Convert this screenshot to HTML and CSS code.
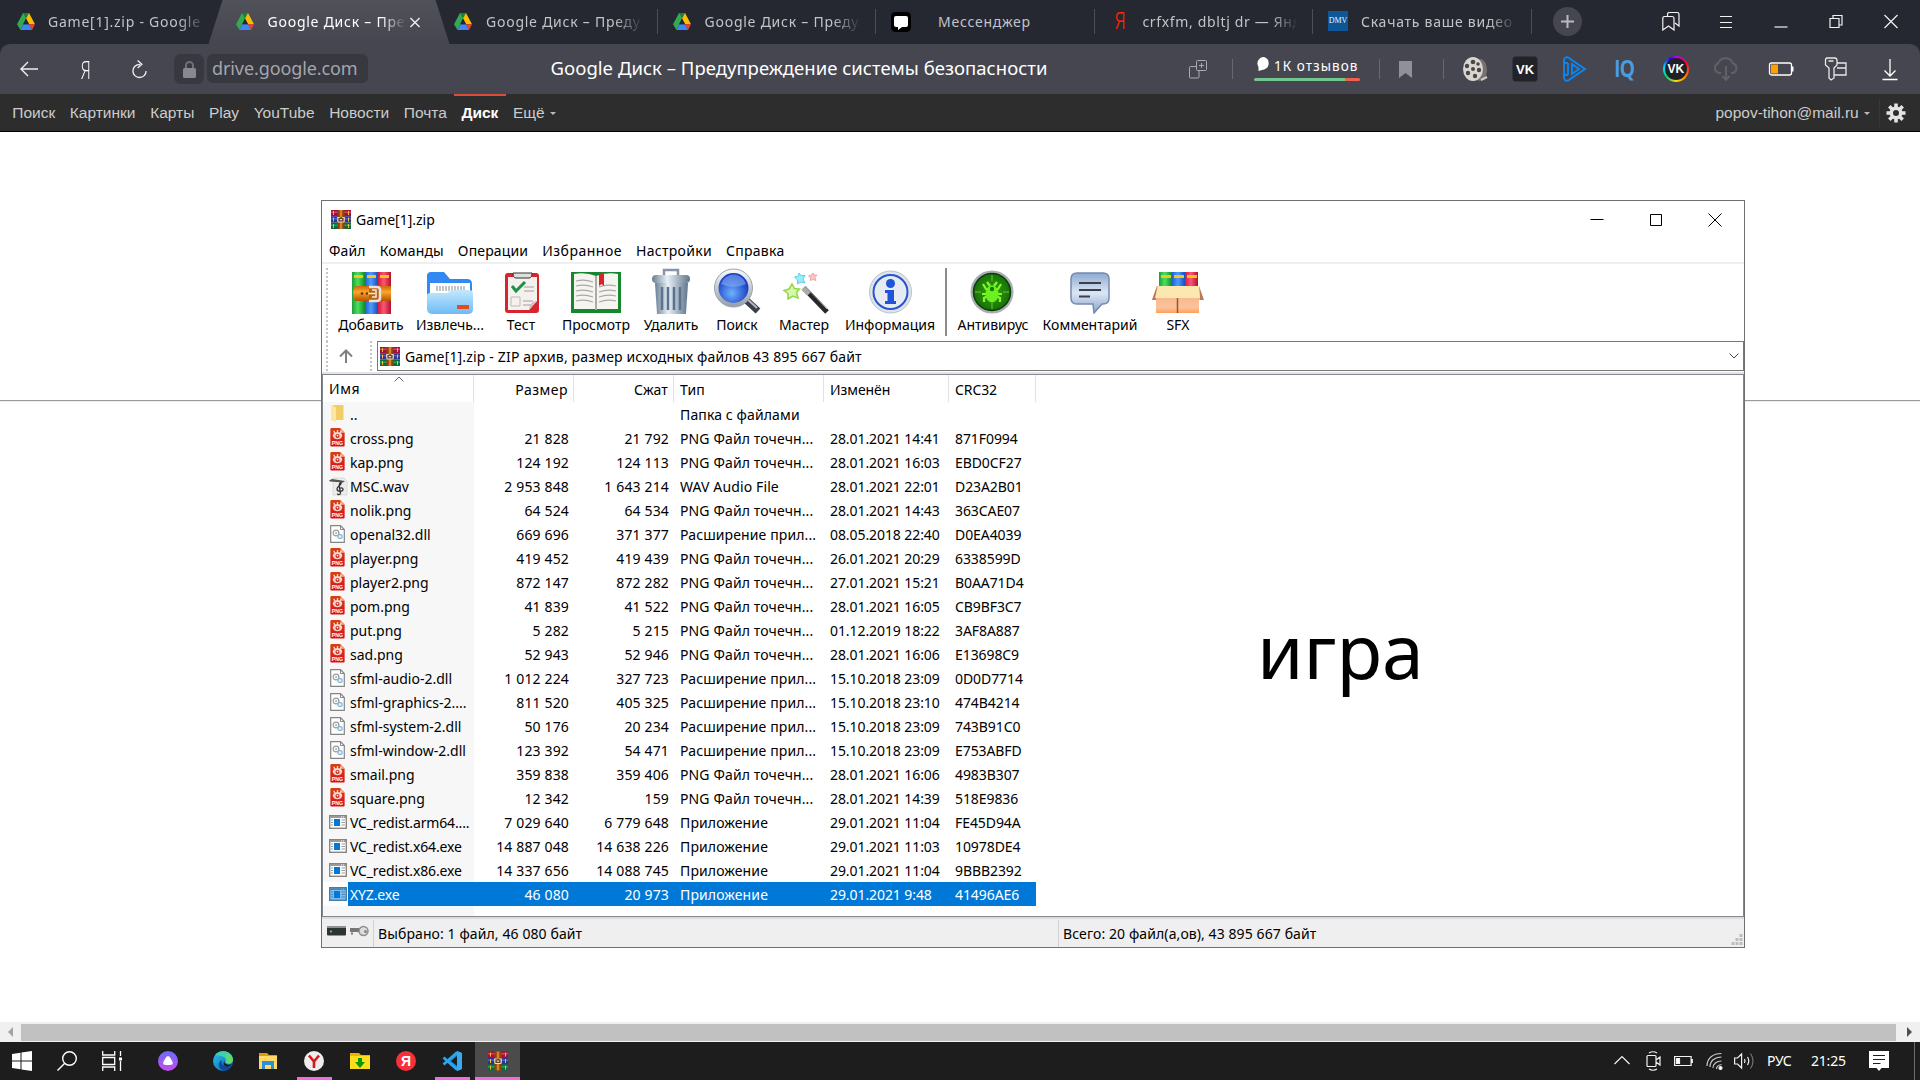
FILE: index.html
```html
<!DOCTYPE html>
<html lang="ru">
<head>
<meta charset="utf-8">
<title>Google Диск – Предупреждение системы безопасности</title>
<link rel="stylesheet" href="styles.css">
</head>
<body>
<svg class="defs" width="0" height="0">
  <defs>
    <linearGradient id="gGreen"><stop offset="0" stop-color="#1f9e3a"/><stop offset=".45" stop-color="#4be05f"/><stop offset="1" stop-color="#128a2b"/></linearGradient>
    <linearGradient id="gBlue"><stop offset="0" stop-color="#1f62d0"/><stop offset=".45" stop-color="#4f9bff"/><stop offset="1" stop-color="#1550b8"/></linearGradient>
    <linearGradient id="gRed"><stop offset="0" stop-color="#d01c40"/><stop offset=".45" stop-color="#ff5470"/><stop offset="1" stop-color="#b01030"/></linearGradient>
    <linearGradient id="gBelt" x2="0" y2="1"><stop offset="0" stop-color="#c96a08"/><stop offset=".4" stop-color="#ffa52a"/><stop offset="1" stop-color="#b35300"/></linearGradient>
    <linearGradient id="gFolder" x2="0" y2="1"><stop offset="0" stop-color="#c4e8fd"/><stop offset="1" stop-color="#6dbbf5"/></linearGradient>
    <linearGradient id="gSteel"><stop offset="0" stop-color="#6b7f94"/><stop offset=".4" stop-color="#e8f0f7"/><stop offset="1" stop-color="#60758b"/></linearGradient>
    <linearGradient id="gRing" x2="0" y2="1"><stop offset="0" stop-color="#f4f6f8"/><stop offset="1" stop-color="#9aa2ab"/></linearGradient>
    <radialGradient id="gLens" cx=".45" cy=".65"><stop offset="0" stop-color="#6eb2ff"/><stop offset="1" stop-color="#1b3fc4"/></radialGradient>
    <radialGradient id="gBug"><stop offset="0" stop-color="#3aa512"/><stop offset="1" stop-color="#146b06"/></radialGradient>
    <linearGradient id="gNote" x2="0" y2="1"><stop offset="0" stop-color="#8fa9d0"/><stop offset=".5" stop-color="#dbe7f6"/><stop offset="1" stop-color="#8aa3c6"/></linearGradient>
    <linearGradient id="gBox" x2="0" y2="1"><stop offset="0" stop-color="#f2b184"/><stop offset=".8" stop-color="#fbc29a"/><stop offset="1" stop-color="#ff9f5c"/></linearGradient>
    <linearGradient id="gPng" x2="0" y2="1"><stop offset="0" stop-color="#d8400d"/><stop offset="1" stop-color="#dc0c25"/></linearGradient>
    <linearGradient id="gEdge" x2="1" y2="1"><stop offset="0" stop-color="#2fc3e8"/><stop offset="1" stop-color="#0a5bb5"/></linearGradient>
    <linearGradient id="gAlice" x2="0" y2="1"><stop offset="0" stop-color="#6c6bff"/><stop offset="1" stop-color="#c34df0"/></linearGradient>
    <symbol id="drive" viewBox="0 0 18 17">
      <path d="M6 0h6l-3 5.500L3.500 17 0 11.300z" fill="#34a853"/><path d="M6 0h6L9 5.500z" fill="#188038"/>
      <path d="M12 0l6 11.300h-6L9 5.500z" fill="#fbbc04"/><path d="M3.500 17 6.300 11.300H12L15 17z" fill="#4285f4"/>
      <path d="M12 11.300h6L15 17z" fill="#ea4335"/><path d="M9 5.500 12 11.300H6.200z" fill="#252732"/>
    </symbol>
    <symbol id="rar" viewBox="0 0 20 19">
      <rect width="20" height="6.200" fill="#a80f38"/><rect y="1.500" width="20" height="1.500" fill="#d0416a"/>
      <rect y="6.200" width="20" height="6.400" fill="#2c3392"/><rect y="8" width="20" height="1.500" fill="#5560c8"/>
      <rect y="12.600" width="20" height="6.400" fill="#0b6a3c"/><rect y="14.500" width="20" height="1.500" fill="#2a9d60"/>
      <path d="M2.500 1v4M2.500 7.500v4M2.500 14v4M17.500 1v4M17.500 7.500v4M17.500 14v4" stroke="#e8b93d" stroke-width="1"/>
      <rect x="6.500" width="7" height="19" fill="#8f4210"/><path d="M10 0v19" stroke="#d98024" stroke-width="2.500"/>
      <path d="M7 7.500h6v4.500H7z" fill="#5c4028"/><path d="M6.800 11.800V7.500h2M13.200 11.800V7.500h-2M8.800 9.700h2.400M6.800 12h6.400" fill="none" stroke="#e9dcc8" stroke-width="1.200"/>
    </symbol>
    <symbol id="png" viewBox="0 0 15 20">
      <path d="M1 0h9.500L15 5v13.500a1 1 0 0 1-1 1H1a1 1 0 0 1-1-1V1a1 1 0 0 1 1-1z" fill="url(#gPng)"/>
      <path d="M10.500 0L15 5h-4.500z" fill="#f0a58c"/>
      <ellipse cx="7.500" cy="8" rx="5" ry="3.900" fill="#f3d5cb"/><path d="M3.500 3l1.500 3M7.500 2v4M11.500 3L10 6" stroke="#f3d5cb" stroke-width="1.500"/>
      <circle cx="7.500" cy="8.300" r="2.100" fill="#c22b12"/><circle cx="7.500" cy="8" r=".9" fill="#fff"/>
      <text x="7.500" y="18.300" text-anchor="middle" class="png-text">PNG</text>
    </symbol>
    <symbol id="dll" viewBox="0 0 15 18">
      <path d="M.7.7h9.800l3.800 3.800v12.800H.7z" fill="#fff" stroke="#858585" stroke-width="1.200"/><path d="M10.500.7v3.800h3.800" fill="none" stroke="#858585"/>
      <circle cx="6" cy="8" r="2.900" fill="none" stroke="#9a9a9a" stroke-width="1.200"/><circle cx="6" cy="8" r="1" fill="#aaa"/>
      <circle cx="10" cy="11.500" r="2.200" fill="#d8edf8" stroke="#86b9d6" stroke-width="1.200"/>
    </symbol>
    <symbol id="exe" viewBox="0 0 18 14">
      <rect x=".7" y=".7" width="16.600" height="12.600" fill="#fff" stroke="#858585" stroke-width="1.400"/>
      <path d="M1 2h16" stroke="#999" stroke-width="2"/><path d="M12 2h1M14 2h1" stroke="#fff"/>
      <rect x="5" y="4" width="6" height="7" fill="#0078d7"/><path d="M2 5h2M2 7.500h2M2 10h2M12.500 5h3.500M12.500 7.500h3.500M12.500 10h3.500" stroke="#999"/>
    </symbol>
    <symbol id="wav" viewBox="0 0 19 19">
      <path d="M4 1h11l3 3v14H4z" fill="#ececec" stroke="#ccc" stroke-width=".6"/>
      <path d="M0 3.500 3 2l13 2-2 1.500L1 4.500z" fill="#555"/>
      <path d="M12 5c-3 2-1.500 5-.5 11 0 2-3 2-3 .5M12 5c1.500 3-4 4-4 7s6 3 6 .5-3.500-2-3.500 0" fill="none" stroke="#333" stroke-width="1.300"/>
    </symbol>
    <symbol id="folder" viewBox="0 0 13 17">
      <path d="M2 0h9.500a1 1 0 0 1 1 1v14H2z" fill="#f1cc67"/><path d="M0 0l5 2.500V17l-5-2z" fill="#fde69f"/>
    </symbol>
  </defs>
</svg>

<header class="browser">
  <nav class="tabs">
    <div class="tab"><svg class="fav"><use href="#drive"/></svg><span class="tab-text">Game[1].zip - Google Диск</span></div>
    <div class="tab active"><svg class="fav"><use href="#drive"/></svg><span class="tab-text">Google Диск – Предупреждение</span>
      <svg class="tab-close" viewBox="0 0 12 12"><path d="M1 1l10 10M11 1L1 11" stroke="#eee" stroke-width="1.500"/></svg></div>
    <div class="tab sep"><svg class="fav"><use href="#drive"/></svg><span class="tab-text">Google Диск – Предупреждение</span></div>
    <div class="tab sep"><svg class="fav"><use href="#drive"/></svg><span class="tab-text">Google Диск – Предупреждение</span></div>
    <div class="tab sep"><svg class="fav big" viewBox="0 0 20 20"><rect width="20" height="20" rx="4.500" fill="#000"/><path d="M5 4h10a2 2 0 0 1 2 2v7a2 2 0 0 1-2 2h-4l-4 3v-3H5a2 2 0 0 1-2-2V6a2 2 0 0 1 2-2z" fill="#fff"/></svg><span class="tab-text wide">Мессенджер</span></div>
    <div class="tab sep"><span class="fav-ya">Я</span><span class="tab-text ya-query">crfxfm, dbltj dr — Яндекс</span></div>
    <div class="tab sep"><span class="fav-dmv">DMV</span><span class="tab-text dmv">Скачать ваше видео</span></div>
    <button class="new-tab"><svg viewBox="0 0 29 29"><circle cx="14.500" cy="14.500" r="14.500" fill="#464650"/><path d="M8 14.500h13M14.500 8v13" stroke="#b9bac0" stroke-width="2"/></svg></button>
    <div class="win-controls">
      <svg viewBox="0 0 18 19"><path d="M5.500 5V2.500q0-2 2-2H15q2 0 2 2V14l-4-3M.8 18V6.500q0-2 2-2H10q2 0 2 2V18l-5.500-4z" /></svg>
      <svg viewBox="0 0 18 19"><path d="M3 4.500h12M3 10.500h12M3 15.500h12"/></svg>
      <svg viewBox="0 0 18 19"><path d="M2.500 15h13"/></svg>
      <svg viewBox="0 0 18 19"><path d="M3 6.500h9v9H3zM6 6V3.500h9V13h-3"/></svg>
      <svg viewBox="0 0 18 19"><path d="M2.500 3l13 13M15.500 3l-13 13"/></svg>
    </div>
  </nav>
  <div class="bar">
    <div class="bar-left">
      <svg class="i-back" viewBox="0 0 18 16"><path d="M18 8H1M8 1L1 8l7 7"/></svg>
      <span class="i-ya">Я</span>
      <svg class="i-reload" viewBox="0 0 16 20"><path d="M8.500 4.500C4 4.500 1 7.500 1 11.500s3 7 7 7 7-3 7-7M6 .5l4.500 4L6 8.500"/></svg>
      <span class="lock"><svg viewBox="0 0 13 17"><path d="M3 8V4.500a3.500 3.500 0 0 1 7 0V8" fill="none" stroke="#6f7079" stroke-width="2"/><rect y="7" width="13" height="10" rx="1.500" fill="#878991"/></svg></span>
      <span class="url">drive.google.com</span>
    </div>
    <div class="page-title">Google Диск – Предупреждение системы безопасности</div>
    <div class="bar-right">
      <svg class="i-copy" viewBox="0 0 18 19"><path d="M7.500 1.500q0-1 1-1h8q1 0 1 1v8q0 1-1 1h-8q-1 0-1-1zM7 6.500H1.500q-1 0-1 1v9.500q0 1 1 1H9q1 0 1-1V11M12.500 3v5M10 5.500h5"/></svg>
      <i class="vr"></i>
      <div class="reviews"><span><svg viewBox="0 0 14 14"><path d="M7 0a6.500 6.500 0 0 1 0 12.500L1.500 14V10A6.500 6.500 0 0 1 7 0z" fill="#fff"/></svg>1К отзывов</span><b></b></div>
      <i class="vr v2"></i>
      <svg class="i-mark" viewBox="0 0 13 17"><path d="M0 0h13v17l-6.500-5L0 17z" fill="#909198"/></svg>
      <i class="vr v3"></i>
      <div class="ext">
        <svg viewBox="0 0 26 26"><ellipse cx="18" cy="14" rx="7" ry="11" fill="#77726f"/><ellipse cx="11" cy="13" rx="10" ry="12" fill="#d8d5d2"/><g fill="#4a4745"><circle cx="11" cy="13" r="2"/><circle cx="11" cy="6" r="2.300"/><circle cx="5" cy="10" r="2.200"/><circle cx="6" cy="17" r="2.200"/><circle cx="13" cy="20" r="2.200"/><circle cx="17" cy="14" r="2.200"/><circle cx="16" cy="8" r="1.800"/></g><path d="M19 24l6-3" stroke="#ccc" stroke-width="2"/></svg>
        <svg viewBox="0 0 26 26"><rect x=".5" y=".5" width="25" height="25" rx="3.500" fill="#222328"/><text x="13" y="18" text-anchor="middle" class="vk">VK</text></svg>
        <svg viewBox="0 0 26 26"><path d="M2 4a3 3 0 0 1 5-2l16 11L7 24a3 3 0 0 1-5-2zM2 7h4M2 19h4M6 7v12M10 8l7 5-7 5z" fill="none" stroke="#0b86f0" stroke-width="1.900"/></svg>
        <span class="iq">IQ</span>
        <span class="vk-ring"><span>VK</span></span>
        <svg viewBox="0 0 26 26"><path d="M8 17H6a5 5 0 0 1-1-9.500 8 8 0 0 1 15 0A5 5 0 0 1 20 17h-2M13 10v13M9.500 20l3.500 4 3.500-4" fill="none" stroke="#606066" stroke-width="2"/></svg>
        <svg class="gap" viewBox="0 0 26 26"><rect x="1.500" y="7" width="22" height="12" rx="2" fill="none" stroke="#fff" stroke-width="1.300"/><path d="M24.500 10.500v5" stroke="#fff" stroke-width="2"/><rect x="3" y="8.500" width="7" height="9" fill="#ffa000"/></svg>
        <svg class="gap" viewBox="0 0 26 26"><path d="M3 2h9q2 0 2 3v4l-3 3v10l-3 2-2-2V12L2.500 9V4q0-2 2-2M5.500 5h5M14 7h9v12H11.500M14 12h9" fill="none" stroke="#e8e8ea" stroke-width="1.300"/></svg>
        <svg class="gap" viewBox="0 0 26 26"><path d="M13 3v17M7.500 14.500L13 20l5.500-5.500M5.500 23.500h15" fill="none" stroke="#fff" stroke-width="1.300"/></svg>
      </div>
    </div>
  </div>
</header>

<nav class="gbar">
  <a>Поиск</a><a>Картинки</a><a>Карты</a><a>Play</a><a>YouTube</a><a>Новости</a><a>Почта</a><a class="on">Диск</a><a>Ещё <i class="caret"></i></a>
  <span class="account">popov-tihon@mail.ru <i class="caret"></i></span>
  <svg class="gear" viewBox="0 0 20 20"><g stroke="#e3e3e3" stroke-width="3.600"><path d="M10 .5v19M.5 10h19M3.300 3.300l13.400 13.400M16.700 3.300L3.300 16.700"/></g><circle cx="10" cy="10" r="6.500" fill="#e3e3e3"/><circle cx="10" cy="10" r="3" fill="#2d2d2d"/></svg>
</nav>

<main class="page"><hr></main>

<section class="winrar">
  <header class="w-title">
    <svg class="w-icon"><use href="#rar"/></svg><span>Game[1].zip</span>
    <div class="w-controls">
      <svg viewBox="0 0 14 14"><path d="M.5 6.500h13"/></svg>
      <svg viewBox="0 0 14 14"><path d="M1.500 1.500h11v11h-11z"/></svg>
      <svg viewBox="0 0 14 14"><path d="M.5.500l13 13M13.500.5l-13 13"/></svg>
    </div>
  </header>
  <nav class="w-menu"><span>Файл</span><span>Команды</span><span>Операции</span><span>Избранное</span><span>Настройки</span><span>Справка</span></nav>
  <div class="w-tools">
    <i class="dots"></i>
    <div class="tool" style="width:78px"><svg viewBox="0 0 52 46"><rect x="7" y="4" width="13" height="42" fill="url(#gGreen)"/><rect x="20" y="4" width="13" height="42" fill="url(#gBlue)"/><rect x="33" y="4" width="13" height="42" fill="url(#gRed)"/><path d="M9 8.500h9M22 8.500h9M35 8.500h9" stroke="#f5c518" stroke-width="3"/><path d="M10 18h36v15H10q-4-7 0-15z" fill="url(#gBelt)"/><path d="M24 19h8q3 0 3 3v8q0 3-3 3h-8" fill="#b86310" stroke="#ebe3da" stroke-width="2.500"/><path d="M27 22h4v7h-4M22 25.500h8" fill="none" stroke="#f6ead8" stroke-width="1.500"/><circle cx="17" cy="25.500" r="1.300" fill="#6a3500"/><circle cx="22" cy="25.500" r="1.300" fill="#6a3500"/></svg>Добавить</div>
    <div class="tool" style="width:80px"><svg viewBox="0 0 52 46"><path d="M3 8q0-4 4-4h13l6 7h17q5 0 5 5v12H3z" fill="#3389f2"/><path d="M6 15h40v14H6z" fill="#fff"/><path d="M12 20.500h29" stroke="#c4c4c4" stroke-width="5" stroke-dasharray="2 1"/><path d="M3 28q0-3 3-3h17l5-3h17q4 0 4 4v15q0 5-5 5H9q-6 0-6-5z" fill="url(#gFolder)"/><path d="M33 39h12" stroke="#e24a22" stroke-width="4"/></svg>Извлечь...</div>
    <div class="tool" style="width:62px"><svg viewBox="0 0 52 46"><rect x="10" y="5" width="34" height="40" rx="3" fill="#d8242f"/><path d="M13 9h29v24L34 42H13z" fill="#f4f1ef"/><path d="M42 33q-7 0-8 9" fill="#c8c4c2"/><path d="M18 5q0 5 3 5h13q3 0 3-5z" fill="#dedede" stroke="#333"/><path d="M17 18l4 5 9-9" fill="none" stroke="#209048" stroke-width="3"/><path d="M29 19h10M29 23h10M28 33h10M28 37h8" stroke="#bbb" stroke-width="1.500"/><path d="M16 29h9v9h-9z" fill="none" stroke="#bbb"/></svg>Тест</div>
    <div class="tool" style="width:88px"><svg viewBox="0 0 52 46"><path d="M1 4h50v41H1z" fill="#15872e"/><path d="M4 6q12-2 22 2 10-4 22-2v35H4z" fill="#f5f4ef"/><path d="M26 8v34" stroke="#aaa" stroke-width="2"/><path d="M6 13q9-2 17 1M6 18q9-2 17 1M6 23q9-2 17 1M6 28q9-2 17 1M6 33q9-2 17 1M29 19q8-3 17-1M29 24q8-3 17-1M29 29q8-3 17-1M29 34q8-3 17-1" fill="none" stroke="#a9a9a9" stroke-width="1.200"/><path d="M29 6h5v12l-2.500-2-2.500 2z" fill="#d9222a"/></svg>Просмотр</div>
    <div class="tool" style="width:62px"><svg viewBox="0 0 52 46"><path d="M19 7V2h14v5" fill="none" stroke="#8795a5" stroke-width="2.500"/><path d="M10 15h33l-2 31H12z" fill="url(#gSteel)"/><path d="M17 19v23M23 19v23M29 19v23M35 19v23" stroke="#5b7290" stroke-width="2.500"/><rect x="7" y="7" width="38" height="8" rx="4" fill="url(#gSteel)"/></svg>Удалить</div>
    <div class="tool" style="width:70px"><svg viewBox="0 0 52 46"><path d="M34 31l13 12" stroke="#3b3f46" stroke-width="7"/><path d="M34 29l12 11" stroke="#b5bac2" stroke-width="2"/><circle cx="22.500" cy="20" r="17" fill="url(#gLens)" stroke="url(#gRing)" stroke-width="4"/><circle cx="22.500" cy="20" r="19" fill="none" stroke="#9aa3b0"/><path d="M10 16q12 6 25 0A13 13 0 0 0 10 16z" fill="#84aef5" opacity=".6"/></svg>Поиск</div>
    <div class="tool" style="width:64px"><svg viewBox="0 0 52 46"><path d="M26 20L49 44" stroke="#282828" stroke-width="5"/><path d="M25 20l6 6" stroke="#aaa" stroke-width="5"/><path d="M28 19l21 22" stroke="#aaa" stroke-width="1"/><path d="M14 16l2.500 4.500 5 .5-3 3.500 1.500 5.500-5-2-5 3v-5.500l-4-3 5-1.500z" fill="#d9f7ab" stroke="#8fd944" stroke-width="1.500"/><path d="M21 5l2 2.500h4l-2 3.500 2 4-4-1-3.500 2v-4l-3-3 4-1z" fill="#9eeafc" stroke="#54d2f0"/><path d="M35 5l1 2h3l-2 2.500 1 3-3-1-2.500 1v-3l-2-1.500 3-1z" fill="#f9c4c4" stroke="#f3a6a6"/></svg>Мастер</div>
    <div class="tool" style="width:108px"><svg viewBox="0 0 52 46"><circle cx="26.500" cy="24" r="21" fill="#dfe4ea" stroke="#b9c2cd"/><circle cx="26.500" cy="24" r="17" fill="#e6ebf2" stroke="#2555cf" stroke-width="2"/><circle cx="26.500" cy="15.500" r="4.500" fill="#1f54d8"/><path d="M21 22h9v11h2v3H21v-3h2.500v-8H21z" fill="#1f54d8"/></svg>Информация</div>
    <i class="tool-sep"></i>
    <div class="tool" style="width:86px"><svg viewBox="0 0 52 46"><circle cx="25" cy="24" r="20" fill="url(#gBug)" stroke="#a9aeb3" stroke-width="3"/><circle cx="25" cy="24" r="18.500" fill="none" stroke="#0c3c0a" stroke-width="1.500"/><path d="M25 7v6M25 35v6M8 24h6M36 24h6" stroke="#5bd02a"/><g stroke="#7dfb2a" stroke-width="2.200" fill="none"><path d="M20 14l3 4M30 14l-3 4M16 16l3 5h12l3-5M15 26h5M30 26h5M17 34v-4l4-2M33 34v-4l-4-2"/></g><ellipse cx="25" cy="26" rx="6.500" ry="8.500" fill="#6bf020"/><circle cx="25" cy="21" r="2.200" fill="#1d7a0a"/></svg>Антивирус</div>
    <div class="tool" style="width:108px"><svg viewBox="0 0 52 46"><path d="M13 5h26q6 0 6 6v19q0 6-6 6h-1l-8 9-1-9H13q-6 0-6-6V11q0-6 6-6z" fill="url(#gNote)" stroke="#748bb0" stroke-width="1.500"/><path d="M15 15h22M15 22h22M15 28.500h11" stroke="#3d4048" stroke-width="2.200"/></svg>Комментарий</div>
    <div class="tool" style="width:68px"><svg viewBox="0 0 52 46"><rect x="7" y="4" width="13" height="20" fill="url(#gGreen)"/><rect x="20" y="4" width="13" height="20" fill="url(#gBlue)"/><rect x="33" y="4" width="13" height="20" fill="url(#gRed)"/><path d="M9 8.500h10M22 8.500h10M35 8.500h10" stroke="#f5c518" stroke-width="3"/><path d="M5 18h42l4 14h-4v13H4V32H0z" fill="url(#gBox)"/><path d="M5 18L0 32h4zM47 18l5 14h-4z" fill="#b97a5a"/><path d="M6 18h41l1 12H3z" fill="#fde7b0"/><path d="M25.500 30v15" stroke="#a4502c" stroke-width="1.500"/></svg>SFX</div>
  </div>
  <div class="w-address">
    <i class="dots"></i>
    <svg class="up" viewBox="0 0 14 14"><path d="M7 14V1.500M1 7.500l6-6 6 6" fill="none" stroke="#808080" stroke-width="2"/></svg>
    <i class="dots second"></i>
    <div class="combo"><svg class="w-icon"><use href="#rar"/></svg><span>Game[1].zip - ZIP архив, размер исходных файлов 43 895 667 байт</span><svg class="chev" viewBox="0 0 10 6"><path d="M.5.500L5 5 9.500.5" fill="none" stroke="#444"/></svg></div>
  </div>
  <div class="list">
    <div class="row head"><span>Имя<svg class="sort" viewBox="0 0 10 6"><path d="M.5 5.500L5 1l4.500 4.500" fill="none" stroke="#666"/></svg></span><span>Размер</span><span>Сжат</span><span>Тип</span><span>Изменён</span><span>CRC32</span></div>
    <div class="row"><span><svg class="f-folder"><use href="#folder"/></svg>..</span><span></span><span></span><span>Папка с файлами</span><span></span><span></span></div>
    <div class="row"><span><svg class="f-png"><use href="#png"/></svg>cross.png</span><span>21 828</span><span>21 792</span><span>PNG Файл точечн...</span><span>28.01.2021 14:41</span><span>871F0994</span></div>
    <div class="row"><span><svg class="f-png"><use href="#png"/></svg>kap.png</span><span>124 192</span><span>124 113</span><span>PNG Файл точечн...</span><span>28.01.2021 16:03</span><span>EBD0CF27</span></div>
    <div class="row"><span><svg class="f-wav"><use href="#wav"/></svg>MSC.wav</span><span>2 953 848</span><span>1 643 214</span><span>WAV Audio File</span><span>28.01.2021 22:01</span><span>D23A2B01</span></div>
    <div class="row"><span><svg class="f-png"><use href="#png"/></svg>nolik.png</span><span>64 524</span><span>64 534</span><span>PNG Файл точечн...</span><span>28.01.2021 14:43</span><span>363CAE07</span></div>
    <div class="row"><span><svg class="f-dll"><use href="#dll"/></svg>openal32.dll</span><span>669 696</span><span>371 377</span><span>Расширение прил...</span><span>08.05.2018 22:40</span><span>D0EA4039</span></div>
    <div class="row"><span><svg class="f-png"><use href="#png"/></svg>player.png</span><span>419 452</span><span>419 439</span><span>PNG Файл точечн...</span><span>26.01.2021 20:29</span><span>6338599D</span></div>
    <div class="row"><span><svg class="f-png"><use href="#png"/></svg>player2.png</span><span>872 147</span><span>872 282</span><span>PNG Файл точечн...</span><span>27.01.2021 15:21</span><span>B0AA71D4</span></div>
    <div class="row"><span><svg class="f-png"><use href="#png"/></svg>pom.png</span><span>41 839</span><span>41 522</span><span>PNG Файл точечн...</span><span>28.01.2021 16:05</span><span>CB9BF3C7</span></div>
    <div class="row"><span><svg class="f-png"><use href="#png"/></svg>put.png</span><span>5 282</span><span>5 215</span><span>PNG Файл точечн...</span><span>01.12.2019 18:22</span><span>3AF8A887</span></div>
    <div class="row"><span><svg class="f-png"><use href="#png"/></svg>sad.png</span><span>52 943</span><span>52 946</span><span>PNG Файл точечн...</span><span>28.01.2021 16:06</span><span>E13698C9</span></div>
    <div class="row"><span><svg class="f-dll"><use href="#dll"/></svg>sfml-audio-2.dll</span><span>1 012 224</span><span>327 723</span><span>Расширение прил...</span><span>15.10.2018 23:09</span><span>0D0D7714</span></div>
    <div class="row"><span><svg class="f-dll"><use href="#dll"/></svg>sfml-graphics-2....</span><span>811 520</span><span>405 325</span><span>Расширение прил...</span><span>15.10.2018 23:10</span><span>474B4214</span></div>
    <div class="row"><span><svg class="f-dll"><use href="#dll"/></svg>sfml-system-2.dll</span><span>50 176</span><span>20 234</span><span>Расширение прил...</span><span>15.10.2018 23:09</span><span>743B91C0</span></div>
    <div class="row"><span><svg class="f-dll"><use href="#dll"/></svg>sfml-window-2.dll</span><span>123 392</span><span>54 471</span><span>Расширение прил...</span><span>15.10.2018 23:09</span><span>E753ABFD</span></div>
    <div class="row"><span><svg class="f-png"><use href="#png"/></svg>smail.png</span><span>359 838</span><span>359 406</span><span>PNG Файл точечн...</span><span>28.01.2021 16:06</span><span>4983B307</span></div>
    <div class="row"><span><svg class="f-png"><use href="#png"/></svg>square.png</span><span>12 342</span><span>159</span><span>PNG Файл точечн...</span><span>28.01.2021 14:39</span><span>518E9836</span></div>
    <div class="row app"><span><svg class="f-exe"><use href="#exe"/></svg>VC_redist.arm64....</span><span>7 029 640</span><span>6 779 648</span><span>Приложение</span><span>29.01.2021 11:04</span><span>FE45D94A</span></div>
    <div class="row app"><span><svg class="f-exe"><use href="#exe"/></svg>VC_redist.x64.exe</span><span>14 887 048</span><span>14 638 226</span><span>Приложение</span><span>29.01.2021 11:03</span><span>10978DE4</span></div>
    <div class="row app"><span><svg class="f-exe"><use href="#exe"/></svg>VC_redist.x86.exe</span><span>14 337 656</span><span>14 088 745</span><span>Приложение</span><span>29.01.2021 11:04</span><span>9BBB2392</span></div>
    <div class="row app selected"><span><svg class="f-exe"><use href="#exe"/></svg>XYZ.exe</span><span>46 080</span><span>20 973</span><span>Приложение</span><span>29.01.2021 9:48</span><span>41496AE6</span></div>
  </div>
  <p class="comment">игра</p>
  <footer class="w-status">
    <div class="s-icons"><svg viewBox="0 0 19 11"><rect y="1" width="19" height="9" rx="1" fill="#2c3534"/><path d="M0 1.500h19" stroke="#8b9694" stroke-width="2"/><circle cx="4" cy="6" r="1" fill="#9bd24a"/></svg><svg viewBox="0 0 19 11"><path d="M0 4.500h11" stroke="#777" stroke-width="4"/><path d="M2 7v2" stroke="#777" stroke-width="2"/><circle cx="13.500" cy="5.500" r="4.500" fill="#ddd" stroke="#8b8f92" stroke-width="1.500"/><circle cx="15.500" cy="6" r="1.500" fill="#888"/></svg></div>
    <div class="s-left">Выбрано: 1 файл, 46 080 байт</div>
    <div class="s-right">Всего: 20 файл(а,ов), 43 895 667 байт</div>
    <svg class="grip" viewBox="0 0 12 12"><path d="M8.500 1.500h3M4.500 5.500h3M8.500 5.500h3M.5 9.500h3M4.500 9.500h3M8.500 9.500h3" stroke="#bdbdbd" stroke-width="3"/></svg>
  </footer>
</section>

<div class="hscroll"><svg viewBox="0 0 5 10"><path d="M5 0v10L0 5z" fill="#a3a3a3"/></svg><i></i><svg viewBox="0 0 5 10"><path d="M0 0v10l5-5z" fill="#505050"/></svg></div>

<footer class="taskbar">
  <div class="apps">
    <span style="width:44px"><svg viewBox="0 0 20 20"><path d="M0 3l8.500-1.200v7.700H0zM9.500 1.600L20 0v9.500H9.500zM0 10.500h8.500v7.700L0 17zM9.500 10.500H20V20L9.500 18.400z" fill="#fff"/></svg></span>
    <span style="width:46px"><svg viewBox="0 0 20 20"><g fill="none" stroke="#fff" stroke-width="1.400"><circle cx="12.500" cy="7.500" r="6.800"/><path d="M7.500 12.500L.5 19.500"/></g></svg></span>
    <span style="width:44px"><svg viewBox="0 0 20 20"><path d="M.7 0v4h12V0M.7 20v-4h12v4M.7 6.500h12v7H.7zM18.500 0v5M18.500 10v10" fill="none" stroke="#fff" stroke-width="1.300"/><rect x="17" y="6.500" width="3" height="3" fill="#fff"/></svg></span>
    <span style="width:67px"><svg viewBox="0 0 20 20"><circle cx="10" cy="10" r="10" fill="url(#gAlice)"/><path d="M10 5q1.500 0 3 3c3 5 2.500 6-3 6s-6-1-3-6q1.500-3 3-3z" fill="#fff"/></svg></span>
    <span style="width:44px"><svg viewBox="0 0 20 20"><circle cx="10" cy="10" r="10" fill="url(#gEdge)"/><path d="M2 4C6-2 19-1 20 8c0 4-4 6-7 4-2-1 1-2-1-5C9 4 4 5 2 4z" fill="#3fd0b0"/><path d="M13 3c5 0 7 4 7 6 0 3-3 4.500-6 3.500z" fill="#6fe04a" opacity=".7"/><path d="M18 14c-5 3-11 0-9-5C2 13 8 21 13 19.500q3-1 5-5.500z" fill="#0c4a9a"/><path d="M12 9a2.500 2.500 0 0 0 1 4q3 1.500 6 0l-1 1.500c-5 3-10-.5-6-5.500z" fill="#1d1d1d"/></svg></span>
    <span style="width:46px"><svg viewBox="0 0 20 20"><path d="M1 2h8l2 2h8v14H1z" fill="#e09a0c"/><path d="M1 5h18v13H1z" fill="#ffd868"/><path d="M4 18v-8h12v8h-3v-4H7v4z" fill="#2f8fd6"/></svg></span>
    <span class="run" style="width:46px"><svg viewBox="0 0 20 20"><circle cx="10" cy="10" r="10" fill="#ededed"/><path d="M5 4.500l5 6 5-6M10 10v7" fill="none" stroke="#d8161d" stroke-width="2.600"/></svg></span>
    <span style="width:46px"><svg viewBox="0 0 20 20"><path d="M0 2h9l2 2h9v14H0z" fill="#f0b400"/><path d="M0 5h20v13H0z" fill="#ffdd1a"/><path d="M8 7h4v4h3l-5 6-5-6h3z" fill="#089a08"/></svg></span>
    <span style="width:46px"><b class="ya-round">Я</b></span>
    <span class="run" style="width:46px"><svg viewBox="0 0 20 20"><path d="M15 0l5 2v16l-5 2-11-10z" fill="#1f8ad2"/><path d="M15 5v10l-6-5z" fill="#1d1d1d"/><path d="M1.500 13.500L15 1.500M1.500 6.500L15 18.500" stroke="#2aa5ee" stroke-width="2.800"/><path d="M15 0l5 2v16l-5 2z" fill="#38aaf2"/></svg></span>
    <span class="run current" style="width:45px"><svg><use href="#rar"/></svg></span>
  </div>
  <div class="tray">
    <svg style="width:16px" viewBox="0 0 16 20"><path d="M.5 13L8 5.500 15.500 13"/></svg>
    <svg style="width:15px" viewBox="0 0 15 20"><path d="M1 5.500q0-1 1-1h7q1 0 1 1v9q0 1-1 1H2q-1 0-1-1zM10 9l4-3v8l-4-3M3 2q4-2.500 8 0M3 18q4 2.500 8 0"/></svg>
    <svg style="width:19px" viewBox="0 0 19 20"><path d="M.6 5.500h16.500v9H.6zM18.300 8v4"/><path d="M2.500 7.500h3v5h-3z" fill="#fff"/></svg>
    <svg style="width:17px" viewBox="0 0 17 20"><path d="M1 15C1 7 7 2.500 15.500 2.500M4 16C4 10 8.500 6 15.500 6M7 17c0-4 3.500-7 8.500-7M10.500 18c0-2.500 2-4 5-4.500" opacity=".8"/><circle cx="14.500" cy="17" r="1.500" fill="#fff"/></svg>
    <svg class="volume" viewBox="0 0 20 20"><path d="M.6 7h3l4-4v14l-4-4h-3zM10.500 8q1 2 0 4M13.500 6q2.500 4 0 8"/><path d="M16.500 2.500q5 7.500 0 15" opacity=".4"/></svg>
    <span class="lang">РУС</span><span class="clock">21:25</span>
    <svg class="note" viewBox="0 0 20 20"><path d="M0 0h20v17h-7.500L10 20l-2.500-3H0z" fill="#fff" stroke="none"/><path d="M4 4.500h12M4 8.500h12M4 12.500h7.500" stroke="#1d1d1d"/></svg>
    <i></i>
  </div>
</footer>
</body>
</html>
```
FILE: styles.css
```css
* { box-sizing: border-box; }
body {
  margin: 0;
  width: 1920px;
  height: 1080px;
  overflow: hidden;
  background: #fff;
  display: flex;
  flex-direction: column;
  font: 14px/20px "Noto Sans", "Open Sans", sans-serif;
  color: #000;
}
svg { display: block; flex: none; }
.defs { position: absolute; }
.png-text { font: bold 5.5px "Liberation Sans", sans-serif; fill: #fff; }

/* browser tabs */
.browser { background: #252731; height: 94px; }
.tabs { display: flex; height: 44px; padding-left: 2px; align-items: stretch; }
.tab { width: 218.5px; display: flex; align-items: center; padding: 0 14px 0 15px; color: #c3c4c8; position: relative; }
.tab + .tab.sep { border-right: 1px solid #4c4d56; border-image: linear-gradient(transparent 10px, #4c4d56 10px, #4c4d56 33px, transparent 33px) 1; }
.tab.active { color: #fff; z-index: 1; }
.tab.active::before {
  content: "";
  position: absolute;
  z-index: -1;
  inset: 0 -12px 0 -12px;
  background: linear-gradient(#51515a, #464650);
  clip-path: polygon(14px 0, 227px 0, 241px 100%, 0 100%);
}
.fav { width: 18px; height: 17px; margin: 0 14px 1px 0; }
.tab:first-child .fav { margin-right: 13px; }
.fav.big { width: 20px; height: 20px; margin: 0 27px 1px 0; }
.tab-text {
  width: 159px;
  overflow: hidden;
  white-space: nowrap;
  letter-spacing: .75px;
  -webkit-mask-image: linear-gradient(90deg, #000 82%, transparent);
  mask-image: linear-gradient(90deg, #000 82%, transparent);
}
.active .tab-text { width: 138px; flex: none; }
.tab-text.wide { mask-image: none; -webkit-mask-image: none; }
.tab-text.ya-query { letter-spacing: .65px; }
.tab-close { width: 12px; height: 11px; margin-left: 3px; }
.fav-ya { width: 33px; padding-left: 5px; color: #f92407; font: 24px/26px "Liberation Sans", sans-serif; transform: scaleX(.62); transform-origin: 5px 50%; margin-bottom: 2px; flex: none; }
.fav-dmv { width: 20px; height: 20px; margin: 0 13px 2px 0; background: #0d5799; color: #e8f2fb; font: 8px/20px "Liberation Serif", serif; text-align: center; flex: none; }
.new-tab { border: 0; background: none; padding: 0; margin: 7px 0 0 21px; width: 29px; height: 29px; }
.win-controls { display: flex; margin: 12px 20px 0 auto; gap: 37px; }
.win-controls svg { width: 18px; height: 19px; fill: none; stroke: #f2f2f3; stroke-width: 1.2; }

/* address bar */
.bar { height: 50px; background: #464650; border-radius: 10px 10px 0 0; display: grid; grid-template-columns: 550.5px 1fr 731px; align-items: center; }
.bar-left { display: flex; align-items: center; padding-left: 20px; }
.bar-left svg { fill: none; stroke: #f0f0f1; stroke-width: 1.4; }
.i-back { width: 18px; height: 16px; }
.i-ya { font: 300 26px/30px "Open Sans", sans-serif; color: #fff; width: 16px; margin-left: 40px; transform: scaleX(.65); }
.i-reload { width: 15px; height: 19px; margin-left: 38px; }
.lock { width: 30px; height: 30px; margin-left: 27px; border-radius: 7px; background: #373840; display: grid; place-items: center; }
.lock svg { width: 13px; height: 17px; stroke: none; }
.url { height: 29px; width: 161px; margin: 0 0 2px 3px; padding-left: 5px; border-radius: 6px; background: #373840; color: #a5a6ac; font-size: 18px; line-height: 28px; letter-spacing: -.1px; white-space: nowrap; }
.page-title { color: #fff; font-size: 18.5px; letter-spacing: .02px; white-space: nowrap; margin-bottom: 2px; }
.bar-right { display: flex; align-items: center; }
.i-copy { width: 18px; height: 19px; fill: none; stroke: #a9aab0; }
.vr { width: 1px; height: 20px; background: #66676f; margin-left: 25px; }
.v2 { margin-left: 19px; }
.v3 { margin-left: 31px; }
.reviews { margin-left: 21px; width: 106px; color: #fff; margin-bottom: 2px; }
.reviews span { display: flex; align-items: center; font-size: 13.5px; letter-spacing: 1.05px; line-height: 20px; white-space: nowrap; padding-left: 3px; }
.reviews svg { width: 14px; height: 14px; margin: 0 3px 4px 0; }
.reviews b { display: block; height: 3px; border-radius: 2px; background: linear-gradient(90deg, #72c58c 91px, #f0604f 91px); margin: 2px 0 0; }
.i-mark { width: 13px; height: 17px; margin-left: 19px; }
.ext { display: flex; margin-left: 18px; gap: 24.2px; align-items: center; }
.ext > * { width: 26px; height: 26px; flex: none; }
.ext .gap { margin-left: 4.6px; }
.vk { font: bold 13px "Liberation Sans", sans-serif; fill: #fff; }
.iq { color: #4a9be0; font: bold 23px/24px "Open Sans", sans-serif; letter-spacing: -1px; margin: 0 -1px 0 1px; transform: scaleX(.85); transform-origin: 0 0; }
.vk-ring { border-radius: 50%; background: conic-gradient(#b0f, #f03 60deg, #f80 130deg, #fd0 180deg, #0d6 225deg, #0df 280deg, #20f 330deg, #b0f); padding: 2px; }
.vk-ring span { display: block; height: 22px; border-radius: 50%; background: #202126; color: #fff; text-align: center; font: bold 12px/22px "Liberation Sans", sans-serif; }

/* google bar */
.gbar { height: 38px; background: #2d2d2d; border-bottom: 1px solid #000; display: flex; align-items: center; padding: 0 14px 0 5px; color: #ccc; font: 15.5px/18px "Liberation Sans", sans-serif; }
.gbar a { padding: 10px 7.3px 9px; height: 37px; letter-spacing: 0; white-space: nowrap; }
.gbar .on { color: #fff; font-weight: bold; border-top: 2px solid #dd4b39; padding-top: 8px; }
.caret { display: inline-block; border: 3.5px solid transparent; border-top-color: #bbb; border-bottom: 0; vertical-align: 3px; margin-left: 1px; }
.account { margin-left: auto; padding-right: 9px; border-right: 1px solid #373737; line-height: 28px; margin-top: 1px; }
.gear { width: 20px; height: 20px; margin-left: 6px; }

.page { height: 890px; flex: none; }
hr { margin: 268px 0 0; height: 2px; border: 0; border-top: 1px solid #9a9a9a; border-bottom: 1px solid #eee; }

/* archiver window */
.winrar { position: absolute; left: 321px; top: 200px; width: 1424px; height: 748px; border: 1px solid #6f6f74; background: #fff; display: flex; flex-direction: column; }
.w-title { height: 39px; display: flex; align-items: center; padding: 0 22px 2px 9px; flex: none; }
.w-icon { width: 20px; height: 19px; margin-right: 5px; }
.w-controls { margin-left: auto; display: flex; gap: 45px; }
.w-controls svg { width: 14px; height: 14px; fill: none; stroke: #000; }
.w-menu { height: 22px; line-height: 22px; display: flex; gap: 14px; padding-left: 7px; white-space: nowrap; flex: none; letter-spacing: .15px; }
.w-menu span:nth-child(n+4) { letter-spacing: .5px; }
.w-menu span:nth-child(n+5) { letter-spacing: .3px; }
.w-tools { height: 79px; border-top: 2px solid #efefef; display: flex; padding-left: 4px; flex: none; }
.dots { width: 2px; margin-top: 4px; background: repeating-linear-gradient(#c4c4c4 0 2px, #fff 2px 4px); }
.w-tools .dots { margin-right: 4px; }
.tool { display: flex; flex-direction: column; align-items: center; padding-top: 4px; white-space: nowrap; }
.tool svg { width: 52px; height: 46px; margin-bottom: 1px; }
.tool-sep { width: 2px; margin: 4px 2px 6px 1px; background: #8c8c8c; height: 68px; flex: none; }
.tool-sep + .tool { margin-left: 1px; }
.w-address { height: 33px; display: flex; padding-left: 4px; border-bottom: 2px solid #e4e4e4; flex: none; }
.w-address .dots { margin-top: 0; }
.up { width: 14px; height: 14px; margin: 8px 17px 0 11px; }
.w-address .second { margin-right: 5px; }
.combo { flex: 1; height: 30px; border: 1px solid #777; display: flex; align-items: center; padding: 0 4px 0 2px; margin-right: 0; }
.combo span { letter-spacing: .16px; padding-top: 2px; }
.chev { width: 10px; height: 6px; margin-left: auto; }
.list { flex: 1; border: 1px solid #828790; background: linear-gradient(90deg, #f7f7f7 151px, #fff 151px) 0 27px no-repeat; }
.row { display: grid; grid-template-columns: 151px 100px 100px 150px 125px 87px; width: 713px; height: 24px; line-height: 24px; white-space: nowrap; }
.row > span { padding: 1px 0 0 6px; letter-spacing: -.08px; height: 24px; }
.row > span:first-child { display: flex; align-items: center; padding-left: 5px; letter-spacing: 0; }
.row > span:nth-child(2), .row > span:nth-child(3) { text-align: right; padding: 1px 5px 0 0; letter-spacing: .15px; }
.row > span:nth-child(4) { letter-spacing: .12px; }
.row.head { height: 27px; line-height: 28px; }
.row.head > span { border-right: 1px solid #e2e2e2; height: 27px; }
.head > span:first-child { position: relative; letter-spacing: .6px; padding-left: 6px; }
.row.head > span:nth-child(2) { letter-spacing: .5px; }
.sort { position: absolute; left: 71px; top: 1px; width: 10px; height: 6px; }
.f-folder { width: 13px; height: 17px; margin: 0 6px 2px 3px; }
.f-png { width: 15px; height: 19px; margin: 0 5px 2px 2px; }
.f-dll { width: 15px; height: 18px; margin: 0 5px 1px 2px; }
.f-exe { width: 18px; height: 14px; margin: 0 3px 2px 1px; }
.f-wav { width: 19px; height: 19px; margin: 0 2px 1px 1px; }
.row.app > span:first-child { letter-spacing: -.15px; }
.selected { color: #fff; background: linear-gradient(90deg, #fff 25px, #0078d7 25px); }
.selected .f-exe { background: #0078d7; }
.selected .f-exe use { opacity: .5; }
.comment { position: absolute; left: 935px; top: 397px; margin: 0; font-size: 75px; line-height: 104px; }
.w-status { height: 30px; background: #efefef; border-top: 2px solid #dcdcdc; display: flex; align-items: center; flex: none; letter-spacing: .1px; }
.s-icons { display: flex; gap: 4px; width: 52px; padding-left: 5px; height: 27px; border-right: 1px solid #d2d2d2; }
.s-icons svg { width: 19px; height: 12px; margin-top: 5px; }
.s-left { width: 685px; padding-left: 4px; border-right: 1px solid #d2d2d2; height: 27px; line-height: 28px; }
.s-right { padding-left: 4px; line-height: 28px; height: 27px; flex: 1; }
.grip { width: 12px; height: 12px; margin: 14px 1px 0 0; }

/* scrollbar and taskbar */
.hscroll { height: 20px; background: #f0f0f0; display: flex; align-items: center; gap: 8px; padding: 0 8px 0 8px; flex: none; }
.hscroll svg { width: 5px; height: 10px; }
.hscroll i { flex: 1; height: 17px; background: #c1c1c1; }
.hscroll svg:last-child { margin: 0 0 0 3px; }
.taskbar { height: 38px; background: #1d1d1d; display: flex; justify-content: space-between; color: #fff; flex: none; }
.apps { display: flex; }
.apps > span { display: grid; place-items: center; position: relative; }
.apps svg { width: 20px; height: 20px; }
.run::after { content: ""; position: absolute; left: 6px; right: 5px; bottom: 0; height: 3px; background: #f16bdc; }
.current { background: #4b4b4b; }
.current::after { left: 0; right: 0; }
.ya-round { width: 20px; height: 20px; border-radius: 50%; background: #f8303a; font: bold 14px/20px "Liberation Sans", sans-serif; text-align: center; }
.tray { display: flex; align-items: center; }
.tray svg { height: 20px; fill: none; stroke: #f2f2f2; stroke-width: 1.2; }
.tray svg + svg { margin-left: 13px; }
.tray svg:first-child + svg { margin-left: 16px; }
.tray svg.volume { width: 20px; margin-left: 11px; }
.lang { width: 27px; margin-left: 13px; letter-spacing: -.3px; }
.clock { width: 36px; margin: 0 22px 0 17px; letter-spacing: -.2px; }
.tray .note { width: 20px; }
.tray i { width: 1px; height: 38px; background: #6b6b6b; margin: 0 5px 0 25px; }
```
